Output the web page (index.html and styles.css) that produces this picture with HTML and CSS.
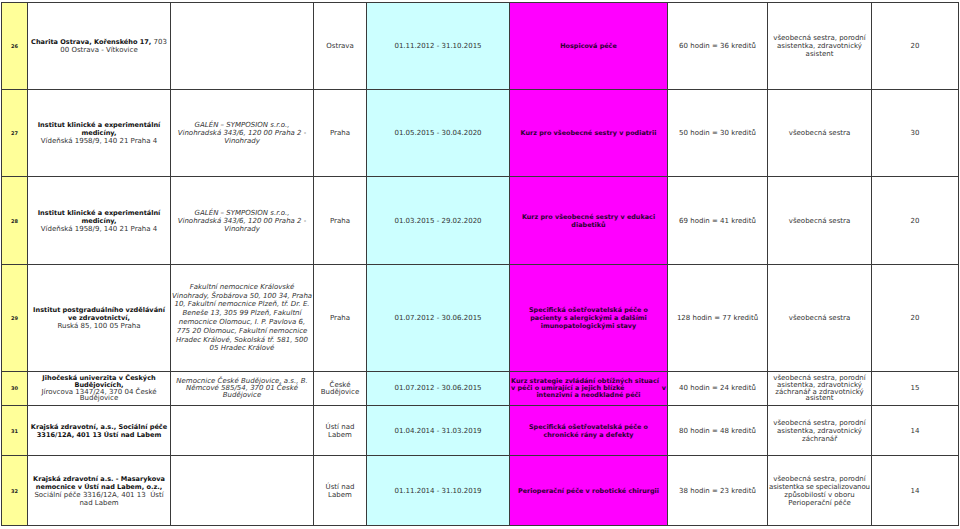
FILE: index.html
```html
<!DOCTYPE html>
<html lang="cs">
<head>
<meta charset="utf-8">
<title>Akreditované kurzy</title>
<link rel="stylesheet" href="styles.css">
</head>
<body>
<table class="grid">
<colgroup>
<col class="c-num"><col class="c-inst"><col class="c-place"><col class="c-city"><col class="c-date"><col class="c-course"><col class="c-hours"><col class="c-prof"><col class="c-count">
</colgroup>
<tbody>
<tr class="r26">
<td class="num">26</td>
<td class="inst"><b>Charita Ostrava, Kořenského 17,</b> 703<br>00 Ostrava - Vítkovice</td>
<td class="place"></td>
<td class="city">Ostrava</td>
<td class="date">01.11.2012 - 31.10.2015</td>
<td class="course">Hospicová péče</td>
<td class="hours">60 hodin = 36 kreditů</td>
<td class="prof">všeobecná sestra, porodní<br>asistentka, zdravotnický<br>asistent</td>
<td class="count">20</td>
</tr>
<tr class="r27">
<td class="num">27</td>
<td class="inst"><b>Institut klinické a experimentální<br>medicíny,</b><br>Vídeňská 1958/9, 140 21 Praha 4</td>
<td class="place">GALÉN – SYMPOSION s.r.o.,<br>Vinohradská 343/6, 120 00 Praha 2 -<br>Vinohrady</td>
<td class="city">Praha</td>
<td class="date">01.05.2015 - 30.04.2020</td>
<td class="course">Kurz pro všeobecné sestry v podiatrii</td>
<td class="hours">50 hodin = 30 kreditů</td>
<td class="prof">všeobecná sestra</td>
<td class="count">30</td>
</tr>
<tr class="r28">
<td class="num">28</td>
<td class="inst"><b>Institut klinické a experimentální<br>medicíny,</b><br>Vídeňská 1958/9, 140 21 Praha 4</td>
<td class="place">GALÉN – SYMPOSION s.r.o.,<br>Vinohradská 343/6, 120 00 Praha 2 -<br>Vinohrady</td>
<td class="city">Praha</td>
<td class="date">01.03.2015 - 29.02.2020</td>
<td class="course">Kurz pro všeobecné sestry v edukaci<br>diabetiků</td>
<td class="hours">69 hodin = 41 kreditů</td>
<td class="prof">všeobecná sestra</td>
<td class="count">20</td>
</tr>
<tr class="r29">
<td class="num">29</td>
<td class="inst"><b>Institut postgraduálního vzdělávání<br>ve zdravotnictví,</b><br>Ruská 85, 100 05 Praha</td>
<td class="place tall">Fakultní nemocnice Královské<br>Vinohrady, Šrobárova 50, 100 34, Praha<br>10, Fakultní nemocnice Plzeň, tř. Dr. E.<br>Beneše 13, 305 99 Plzeň, Fakultní<br>nemocnice Olomouc, I. P. Pavlova 6,<br>775 20 Olomouc, Fakultní nemocnice<br>Hradec Králové, Sokolská tř. 581, 500<br>05 Hradec Králové</td>
<td class="city">Praha</td>
<td class="date">01.07.2012 - 30.06.2015</td>
<td class="course">Specifická ošetřovatelská péče o<br>pacienty s alergickými a dalšími<br>imunopatologickými stavy</td>
<td class="hours">128 hodin = 77 kreditů</td>
<td class="prof">všeobecná sestra</td>
<td class="count">20</td>
</tr>
<tr class="r30 tight">
<td class="num">30</td>
<td class="inst"><b>Jihočeská univerzita v Českých<br>Budějovicích,</b><br>Jírovcova 1347/24, 370 04 České<br>Budějovice</td>
<td class="place">Nemocnice České Budějovice, a.s., B.<br>Němcové 585/54, 370 01 České<br>Budějovice</td>
<td class="city">České<br>Budějovice</td>
<td class="date">01.07.2012 - 30.06.2015</td>
<td class="course"><span class="jline">Kurz strategie zvládání obtížných situací</span><span class="tabline"><span>v péči o umírající a jejich blízké</span><span>v</span></span><span class="cline">intenzivní a neodkladné péči</span></td>
<td class="hours">40 hodin = 24 kreditů</td>
<td class="prof">všeobecná sestra, porodní<br>asistentka, zdravotnický<br>záchranář a zdravotnický<br>asistent</td>
<td class="count">15</td>
</tr>
<tr class="r31">
<td class="num">31</td>
<td class="inst"><b>Krajská zdravotní, a.s., Sociální péče<br>3316/12A, 401 13 Ústí nad Labem</b></td>
<td class="place"></td>
<td class="city">Ústí nad<br>Labem</td>
<td class="date">01.04.2014 - 31.03.2019</td>
<td class="course">Specifická ošetřovatelská péče o<br>chronické rány a defekty</td>
<td class="hours">80 hodin = 48 kreditů</td>
<td class="prof">všeobecná sestra, porodní<br>asistentka, zdravotnický<br>záchranář</td>
<td class="count">14</td>
</tr>
<tr class="r32">
<td class="num">32</td>
<td class="inst"><b>Krajská zdravotní a.s. - Masarykova<br>nemocnice v Ústí nad Labem, o.z.,</b><br>Sociální péče 3316/12A, 401 13&nbsp; Ústí<br>nad Labem</td>
<td class="place"></td>
<td class="city">Ústí nad<br>Labem</td>
<td class="date">01.11.2014 - 31.10.2019</td>
<td class="course">Perioperační péče v robotické chirurgii</td>
<td class="hours">38 hodin = 23 kreditů</td>
<td class="prof">všeobecná sestra, porodní<br><span class="squeeze">asistentka se specializovanou</span><br>způsobilostí v oboru<br>Perioperační péče</td>
<td class="count">14</td>
</tr>
</tbody>
</table>
</body>
</html>
```

FILE: styles.css
```css
html, body {
  margin: 0;
  padding: 0;
  background: #ffffff;
}

body {
  padding: 2px 0 0 1px;
  font-family: "DejaVu Sans", Verdana, sans-serif;
  font-size: 7px;
  line-height: 8px;
  color: #333333;
}

.grid {
  border-collapse: collapse;
  table-layout: fixed;
  width: 957px;
}

.grid td {
  border: 1px solid #3a3a3a;
  padding: 0 1px;
  text-align: center;
  vertical-align: middle;
  white-space: nowrap;
  overflow: hidden;
}

.grid b {
  color: #111111;
  font-weight: bold;
  font-size: 6.55px;
}

.c-num { width: 26px; }
.c-inst { width: 143px; }
.c-place { width: 143px; }
.c-city { width: 53px; }
.c-date { width: 143px; }
.c-course { width: 158px; }
.c-hours { width: 100px; }
.c-prof { width: 104px; }
.c-count { width: 87px; }

.r26 td, .r27 td { height: 86px; }
.r28 td { height: 87px; }
.r29 td { height: 106px; }
.r30 td { height: 33px; }
.r31 td { height: 49px; }
.r32 td { height: 69px; }

.tight td { line-height: 6.8px; }

.num {
  background: #ffff99;
  font-weight: bold;
  font-size: 5px;
  color: #222222;
}

.place {
  font-style: italic;
}

.place.tall {
  line-height: 8.8px;
}

.date {
  background: #ccffff;
}

.course {
  background: #ff00ff;
  color: #2a0030;
  font-weight: bold;
  font-size: 6.45px;
}

.prof {
  padding: 0;
}

.squeeze {
  letter-spacing: -0.12px;
}

.jline,
.cline {
  display: block;
}

.jline {
  text-align: left;
}

.tabline {
  display: flex;
  justify-content: space-between;
}
```
